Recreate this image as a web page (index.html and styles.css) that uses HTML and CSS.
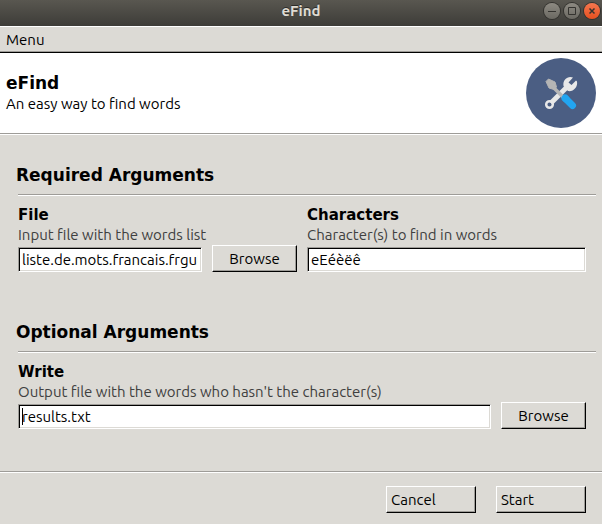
FILE: index.html
```
<!DOCTYPE html>
<html lang="en">
<head>
<meta charset="utf-8">
<title>eFind</title>
<link rel="stylesheet" href="styles.css">
</head>
<body>
<div class="window">
  <div class="titlebar">
    <span class="title">eFind</span>
    <div class="controls">
      <button type="button" class="control" aria-label="Minimize"><svg viewBox="0 0 16 16"><path d="M4 8.5h8"/></svg></button>
      <button type="button" class="control" aria-label="Maximize"><svg viewBox="0 0 16 16"><path d="M4.5 4.5h7v7h-7z"/></svg></button>
      <button type="button" class="control close" aria-label="Close"><svg viewBox="0 0 16 16"><path d="M5.500 5.500l5 5M10.500 5.500l-5 5" stroke-width="1.500"/></svg></button>
    </div>
  </div>
  <nav class="menubar"><button type="button" class="menu">Menu</button></nav>
  <header class="banner">
    <div>
      <h1>eFind</h1>
      <p class="tagline">An easy way to find words</p>
    </div>
    <svg class="logo" viewBox="0 0 70 70" aria-hidden="true">
      <circle cx="35" cy="35" r="35" fill="#4b5e83"/>
      <path d="M25 45L43 27" stroke="#e8e8e8" stroke-width="5"/>
      <circle cx="23.500" cy="46.500" r="3.300" fill="none" stroke="#e8e8e8" stroke-width="2.500"/>
      <path d="M47 19.500C42 17.500 36.500 21.500 37.500 28L42 33C47 34 52 29.500 51 23.500L50 22.500L45.500 27L42.500 24.500z" fill="#e8e8e8"/>
      <path d="M26 28L38 40" stroke="#b5b5b5" stroke-width="3.500"/>
      <path d="M20 23.500L22.500 21L29 24L30.500 29L28 31.500L23 30z" fill="#b5b5b5" stroke="#b5b5b5" stroke-linejoin="round"/>
      <path d="M39 40L46.500 47.500" stroke="#22a5f1" stroke-width="7" stroke-linecap="round"/>
      <path d="M35.500 41.500L40.500 36.500L43.500 39.500L38.500 44.500z" fill="#22a5f1"/>
    </svg>
  </header>
  <form class="form">
    <main class="content">
      <section>
        <h2>Required Arguments</h2>
        <hr>
        <div class="fields">
          <div class="field">
            <label for="file">File</label>
            <p class="hint">Input file with the words list</p>
            <div class="entry"><input id="file" type="text" value="liste.de.mots.francais.frgut.txt"><button type="button">Browse</button></div>
          </div>
          <div class="field">
            <label for="chars">Characters</label>
            <p class="hint">Character(s) to find in words</p>
            <div class="entry"><input id="chars" type="text" value="eEéèëê"></div>
          </div>
        </div>
      </section>
      <section>
        <h2>Optional Arguments</h2>
        <hr>
        <div class="fields">
          <div class="field">
            <label for="write">Write</label>
            <p class="hint">Output file with the words who hasn't the character(s)</p>
            <div class="entry caret"><input id="write" type="text" value="results.txt"><button type="button">Browse</button></div>
          </div>
        </div>
      </section>
    </main>
    <footer class="actions">
      <button type="button">Cancel</button>
      <button type="button">Start</button>
    </footer>
  </form>
</div>
</body>
</html>
```
FILE: styles.css
```
* { box-sizing: border-box; }
body {
  margin: 0;
  background: #dcdad5;
  color: #000;
  font: 15px/20px "Ubuntu", "Noto Sans", sans-serif;
}
h1, h2, p { margin: 0; }
button, input { font: inherit; color: inherit; margin: 0; }

.window { display: flex; flex-direction: column; min-height: 100vh; }

.titlebar {
  display: grid;
  grid-template-columns: 1fr auto 1fr;
  align-items: center;
  height: 26px;
  padding-bottom: 4px;
  background: linear-gradient(#595750, #3d3c38);
  color: #dfdbd2;
}
.title { grid-column: 2; font-weight: 700; text-shadow: 0 -1px #2b2a27; }
.controls { display: flex; justify-content: flex-end; gap: 4px; padding-right: 2px; }
.control {
  width: 16px;
  height: 16px;
  padding: 0;
  border: 0;
  border-radius: 50%;
  background: linear-gradient(#8d8a82, #6b6962);
  box-shadow: 0 0 0 1px #33322e;
}
.control svg { display: block; fill: none; stroke: #34332f; }
.close { background: linear-gradient(#f4774f, #e6501f); }

.menubar {
  height: 27px;
  border-top: 1px solid #fff;
  border-bottom: 1px solid #000;
  box-shadow: inset 0 -1px #9e9c98;
  padding: 3px 6px;
}
.menu { display: block; padding: 0; border: 0; background: none; }

.banner {
  display: flex;
  align-items: center;
  justify-content: space-between;
  height: 80px;
  padding: 0 6px;
  background: #fff;
}
h1, h2 { font: 700 17px/20px "DejaVu Sans", sans-serif; }
h1 { line-height: 22px; }
.logo { width: 70px; height: 70px; }

.form { display: flex; flex: 1; flex-direction: column; }
.content {
  flex: 1;
  border-top: 1px solid #9e9c98;
  box-shadow: inset 0 1px #fff;
  padding: 31px 6px 42px 16px;
}
section + section { margin-top: 50px; }
hr {
  height: 2px;
  margin: 9px 0 10px 2px;
  border: 0;
  border-top: 1px solid #9e9c98;
  border-bottom: 1px solid #fff;
}
.fields { display: flex; gap: 10px; padding: 0 10px 0 2px; }
.field { flex: 1; min-width: 0; }
label { display: block; font: 700 15px/19px "DejaVu Sans", sans-serif; }
.hint { color: #404040; }
.entry { display: flex; align-items: flex-end; gap: 10px; height: 27px; position: relative; }
.entry input {
  flex: 1;
  min-width: 0;
  height: 25px;
  padding: 0 3px;
  background: #fff;
  border: 1px solid;
  border-color: #9e9c98 #fff #fff #9e9c98;
  box-shadow: inset 1px 1px #000, inset -1px -1px #dcdad5;
  outline: 0;
}
.caret::before {
  content: "";
  position: absolute;
  left: 4px;
  bottom: 4px;
  width: 1px;
  height: 17px;
  background: #000;
}
.entry button, .actions button {
  height: 27px;
  padding: 0 4px;
  background: #dcdad5;
  border: 1px solid;
  border-color: #fff #000 #000 #fff;
  box-shadow: inset -1px -1px #9e9c98;
}
.entry button { width: 85px; }
.actions {
  display: flex;
  justify-content: flex-end;
  gap: 20px;
  padding: 14px 16px 11px;
  border-top: 1px solid #9e9c98;
  box-shadow: inset 0 1px #fff;
}
.actions button { width: 90px; text-align: left; }
```
